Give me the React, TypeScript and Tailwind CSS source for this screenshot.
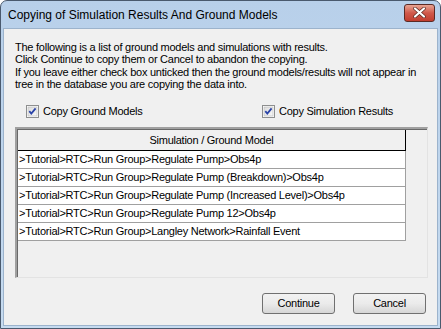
import React from "react";

const rows = [
  ">Tutorial>RTC>Run Group>Regulate Pump>Obs4p",
  ">Tutorial>RTC>Run Group>Regulate Pump (Breakdown)>Obs4p",
  ">Tutorial>RTC>Run Group>Regulate Pump (Increased Level)>Obs4p",
  ">Tutorial>RTC>Run Group>Regulate Pump 12>Obs4p",
  ">Tutorial>RTC>Run Group>Langley Network>Rainfall Event",
];

function Check() {
  return (
    <svg width="13" height="13" viewBox="0 0 13 13" className="shrink-0">
      <defs>
        <linearGradient id="cbg" x1="0" y1="0" x2="1" y2="1">
          <stop offset="0" stopColor="#dcdcdc" />
          <stop offset="1" stopColor="#f8f8f8" />
        </linearGradient>
      </defs>
      <rect x="0.5" y="0.5" width="12" height="12" fill="#fff" stroke="#8e8f8f" />
      <rect x="2" y="2" width="9" height="9" fill="url(#cbg)" stroke="#b8b8b8" strokeWidth="0.6" />
      <path d="M3.3 6.2 L5.3 8.6 L9.6 3.4" fill="none" stroke="#2b44a8" strokeWidth="1.8" />
    </svg>
  );
}

function Btn({ label }: { label: string }) {
  return (
    <div className="w-[73px] h-[21px] rounded-[3px] border border-[#707070] bg-gradient-to-b from-[#f2f2f2] via-[#ebebeb] to-[#d6d6d6] flex items-center justify-center text-[11px] text-black">
      {label}
    </div>
  );
}

export default function App() {
  return (
    <div
      className="w-[441px] h-[329px] flex flex-col rounded-t-[7px] border border-[#4a5a6e] bg-gradient-to-b from-[#b8d0ea] to-[#c6dbf0] overflow-hidden"
      style={{ fontFamily: '"Liberation Sans", Arial, sans-serif' }}
    >
      <div className="h-[27px] flex items-center pl-[7px] pr-[5px] shrink-0">
        <span className="text-[12px] text-black flex-1">
          Copying of Simulation Results And Ground Models
        </span>
        <div className="w-[31px] h-[18px] mt-[-4px] rounded-[3px] border border-[#5b2a24] bg-gradient-to-b from-[#e7a493] via-[#d0584a] to-[#c13d2e] flex items-center justify-center">
          <svg width="13" height="11" viewBox="0 0 13 11">
            <path d="M2 1.5 L11 9.5 M11 1.5 L2 9.5" stroke="#5a2a22" strokeWidth="3.6" strokeLinecap="round" />
            <path d="M2 1.5 L11 9.5 M11 1.5 L2 9.5" stroke="#ffffff" strokeWidth="2.2" strokeLinecap="round" />
          </svg>
        </div>
      </div>
      <div className="flex-1 mx-[2px] mb-[2px] border border-[#9cb3cc] bg-[#f0f0f0] flex flex-col pl-[11px] pr-[9px] text-[11px] text-black tracking-[-0.25px]">
        <div className="mt-[12px] leading-[12.3px] whitespace-nowrap">
          <div>The following is a list of ground models and simulations with results.</div>
          <div>Click Continue to copy them or Cancel to abandon the copying.</div>
          <div>If you leave either check box unticked then the ground models/results will not appear in</div>
          <div>tree in the database you are copying the data into.</div>
        </div>
        <div className="mt-[14px] flex items-center h-[15px]">
          <div className="flex items-center gap-[4px] ml-[11px] w-[236px]">
            <Check />
            <span>Copy Ground Models</span>
          </div>
          <div className="flex items-center gap-[4px]">
            <Check />
            <span>Copy Simulation Results</span>
          </div>
        </div>
        <div className="mt-[8px] h-[151px] border-t-2 border-l-2 border-t-[#a0a0a0] border-l-[#a0a0a0] border-b border-r border-b-[#e3e3e3] border-r-[#e3e3e3] bg-[#f0f0f0]">
          <div className="h-full border-l border-t border-l-[#696969] border-t-[#696969] flex flex-col">
            <div className="w-[388px] h-[21px] border-b border-r border-black flex items-center justify-center bg-[#f0f0f0]">
              Simulation / Ground Model
            </div>
            {rows.map((r) => (
              <div
                key={r}
                className="w-[388px] h-[18px] bg-white border-b border-r border-[#a0a0a0] flex items-center pl-[1px] whitespace-nowrap"
              >
                {r}
              </div>
            ))}
          </div>
        </div>
        <div className="mt-[15px] flex justify-end gap-[18px] pr-[2px]">
          <Btn label="Continue" />
          <Btn label="Cancel" />
        </div>
      </div>
    </div>
  );
}
